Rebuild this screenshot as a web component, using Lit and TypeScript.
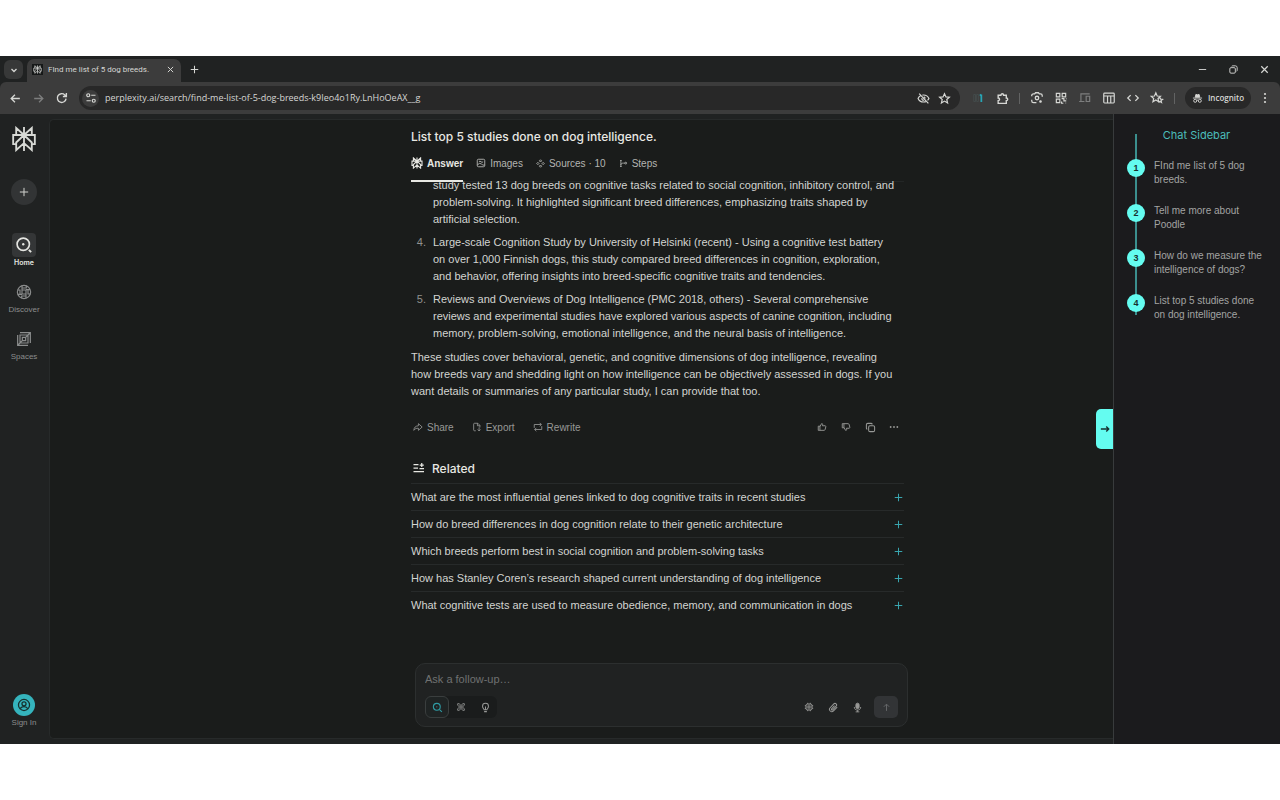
import { LitElement, html, css, svg, TemplateResult } from "lit";
import { customElement } from "lit/decorators.js";

const glyphs: Record<string, TemplateResult> = {
  chevron: svg`<path d="M7 10l5 5 5-5" stroke-width="2.6"/>`,
  close: svg`<path d="M5 5l14 14M19 5L5 19" stroke-width="2.6"/>`,
  plus: svg`<path d="M12 2v20M2 12h20"/>`,
  back: svg`<path d="M20 12H5M11 5l-7 7 7 7" stroke-width="2.4"/>`,
  forward: svg`<path d="M4 12h15M13 5l7 7-7 7" stroke-width="2.4"/>`,
  reload: svg`<path d="M19 13a7.5 7.5 0 1 1-2.2-6.3L19 9M19.500 3.500V9.500H13.500" stroke-width="2.4"/>`,
  tune: svg`<circle cx="6.500" cy="6.500" r="3"/><path d="M12.500 6.500H21M3 17.500h8.500"/><circle cx="17.500" cy="17.500" r="3"/>`,
  eyeOff: svg`<path d="M6.500 7C4.200 8.300 2.700 10.200 2 12c1.700 4 5.600 6.500 10 6.500 1.600 0 3-.3 4.300-.8M10 5.700c.7-.1 1.300-.2 2-.2 4.400 0 8.300 2.500 10 6.500-.5 1.300-1.400 2.500-2.500 3.500M4 3l17 18M9 11.500a3 3 0 0 0 4 3.500M12.500 9a3 3 0 0 1 2.500 3"/>`,
  star: svg`<path d="M12 3l2.700 6 6.300.6-4.800 4.200 1.500 6.400L12 16.800l-5.700 3.400 1.500-6.400L3 9.600 9.300 9z"/>`,
  starGroup: svg`<path d="M10 3l2.300 5.500 5.700.5-4.300 3.800L15 18.500l-5-3-5 3 1.300-5.700L2 9l5.700-.5zM14 13l3-2 1.300 3 3.200.3-2.500 2 .8 3.500-2.800-1.700-2.500 1.700"/>`,
  meter: svg`<path d="M3 6h3v12H3zM8 6h3v12H8z" stroke="#465050" stroke-width="1.200"/><path d="M16 6v13M13.500 8l2.500-2" stroke="#28a5b5" stroke-width="3"/>`,
  puzzle: svg`<path d="M4 6h5c0-3.500 5-3.500 5 0h5v5c3.500 0 3.500 5 0 5v5H4v-5c3.500 0 3.500-5 0-5z"/>`,
  lens: svg`<path d="M3 9V7a3 3 0 0 1 3-2h2l1.500-2h5L16 5h2a3 3 0 0 1 3 3v2M3 15v2a3 3 0 0 0 3 3h5"/><circle cx="12" cy="12" r="3"/><circle cx="18" cy="18" r="1.200" fill="currentColor"/>`,
  qr: svg`<path d="M4 4h6v6H4zM14 4h6v6h-6zM4 14h6v6H4z"/><path d="M13 13h4v4h4M21 13v1M13 18v3h3M20 20v1"/>`,
  devices: svg`<path d="M5 17V5h15M2 18h9M14 9h6v9h-6z"/>`,
  layout: svg`<rect x="3" y="3.500" width="18" height="17" rx="1.500"/><path d="M3 8.500h18M9.500 8.500v12M15 8.500v12"/>`,
  code: svg`<path d="M8 7l-5 5 5 5M16 7l5 5-5 5" stroke-width="2.200"/>`,
  incognito: svg`<path d="M7 9l1.500-6 3.500 1 3.500-1L17 9z" fill="currentColor"/><path d="M2 11h20"/><circle cx="7" cy="17" r="3.300"/><circle cx="17" cy="17" r="3.300"/><path d="M10 16q2-1 4 0"/>`,
  kebab: svg`<g fill="currentColor" stroke="none"><circle cx="12" cy="4" r="2.200"/><circle cx="12" cy="12" r="2.200"/><circle cx="12" cy="20" r="2.200"/></g>`,
  dots: svg`<g fill="currentColor" stroke="none"><circle cx="4" cy="12" r="2.200"/><circle cx="12" cy="12" r="2.200"/><circle cx="20" cy="12" r="2.200"/></g>`,
  minimize: svg`<path d="M4 12h16"/>`,
  restore: svg`<rect x="4" y="8" width="12" height="12" rx="2.500"/><path d="M8 5q1-1 3-1h5q4 0 4 4v5q0 2-1 3"/>`,
  logo: svg`<path d="M12 1v22M4.800 8.300V1.800L12 8.300l7.200-6.500v6.500M4.800 16.800H2V8.300h20v8.500h-2.800M12 8.300l-7.200 6.900v7l7.200-6.400 7.200 6.400v-7z"/>`,
  home: svg`<circle cx="11" cy="11" r="8.200"/><circle cx="11" cy="11" r="1.600" fill="currentColor" stroke="none"/><path d="M18.500 18.500l3 3" stroke-width="2.600"/>`,
  discover: svg`<circle cx="12" cy="12" r="10"/><path d="M9 2.500V9h6.500M2.500 9H6v6M15 21.500V15H8.500M21.500 15H18V9M15.500 2.800V6H9M8.500 21.200V18H15M9 9v6M15 9v6M2.800 15.500H9M15 8.500h6"/>`,
  spaces: svg`<path d="M6 2.500h15.500v15.500M2.500 6v15.500H18M6 6h12v12H6zM9.500 9.500h5v5h-5zM18 6l3.500-3.500M2.500 21.500L6 18M14.500 9.500L18 6M6 18l3.500-3.500"/>`,
  images: svg`<rect x="3" y="3" width="18" height="18" rx="3"/><path d="M3 17l5-4 5 1 3 3h5"/><path d="M7 9q2.500-3 5 0t5 0"/>`,
  sources: svg`<path d="M12 2l3 3-3 3-3-3zM12 16l3 3-3 3-3-3zM5 9l3 3-3 3-3-3zM19 9l3 3-3 3-3-3z"/>`,
  steps: svg`<path d="M5 3v18M5 16c0-4 3-5 7-5h4"/><circle cx="18" cy="11" r="2.400"/><path d="M3 4h4M3 20h4"/>`,
  share: svg`<path d="M13 4l9 8-9 8v-5C8 14.500 5 16 2 20c.5-7 4-10.500 11-11z"/>`,
  export: svg`<path d="M9 21H6q-2 0-2-2V5q0-2 2-2h8l5 5v5M13 3v6h6M17 13v8M13.500 18l3.500 3.500 3.500-3.500"/>`,
  rewrite: svg`<path d="M3 14V6h17M16 2l4 4-4 4M21 10v8H4M8 14l-4 4 4 4"/>`,
  up: svg`<path d="M3 10h4v10H3zM7 11l4-7c3-.5 3 1.500 2 5h7q1.500 1 1 3l-1.500 6q-.6 2-2.500 2H7"/>`,
  down: svg`<path d="M3 14h4V4H3zM7 13l4 7c3 .5 3-1.500 2-5h7q1.500-1 1-3l-1.500-6Q18.900 4 17 4H7"/>`,
  copy: svg`<rect x="8" y="8" width="13" height="13" rx="3"/><path d="M5 16q-2-.5-2-3V6q0-3 3-3h7q2.500 0 3 2"/>`,
  related: svg`<path d="M1 5h10M1 12h9M1 19h21M13 13h9M17.500 2v8M13.500 6h8" stroke-width="2.500"/>`,
  search: svg`<circle cx="10.500" cy="10.500" r="7.500"/><circle cx="10.500" cy="10.500" r="1.300" fill="currentColor" stroke="none"/><path d="M16.500 16.500L21.500 21.500"/>`,
  research: svg`<path d="M4 4h4l4 5 4-5h4v4l-5 4 5 4v4h-4l-4-5-4 5H4v-4l5-4-5-4z"/><path d="M8 8l8 8M16 8l-8 8" stroke-width="1.500"/>`,
  bulb: svg`<path d="M9 17c0-2-3.500-3.500-3.500-8a6.500 6.500 0 0 1 13 0c0 4.500-3.500 6-3.500 8zM9 21h6M12 10v6"/>`,
  chip: svg`<rect x="5" y="5" width="14" height="14" rx="3"/><rect x="9.500" y="9.500" width="5" height="5"/><path d="M9 2v3M15 2v3M9 19v3M15 19v3M2 9h3M2 15h3M19 9h3M19 15h3"/>`,
  clip: svg`<path d="M20 11l-8 8.500a5 5 0 0 1-7.300-7l8-8.300a3.500 3.500 0 0 1 5 5l-7.500 8a1.600 1.600 0 0 1-2.400-2.300l6.500-7"/>`,
  mic: svg`<rect x="8.500" y="2.500" width="7" height="12" rx="3.500" fill="currentColor"/><path d="M5 11c0 9 14 9 14 0M12 18v3.500M8 21.500h8"/>`,
  arrowUp: svg`<path d="M12 21V4M5 10l7-7 7 7"/>`,
  arrowRight: svg`<path d="M2 12h19M15 6l6 6-6 6" stroke-width="3.200"/>`,
  user: svg`<circle cx="12" cy="12" r="9.500"/><circle cx="12" cy="10" r="3.500"/><path d="M5.500 18.500c2-5 11-5 13 0"/>`,
};

const icon = (name: string, size = 12, weight = 2) => html`<svg
  class="icon" width=${size} height=${size} viewBox="0 0 24 24" fill="none"
  stroke="currentColor" stroke-width=${weight} aria-hidden="true">${glyphs[name]}</svg>`;

const shared = css`
  * { box-sizing: border-box; }
  button {
    font: inherit; color: inherit; background: none; border: 0; padding: 0; margin: 0;
    display: flex; align-items: center; justify-content: center; cursor: pointer;
  }
  a { color: inherit; text-decoration: none; }
  ol, ul, h1, h2, p { margin: 0; padding: 0; font: inherit; }
  .icon { display: block; flex: none; }
`;

@customElement("browser-chrome")
class BrowserChrome extends LitElement {
  static styles = [shared, css`
    :host { display: block; background: #202222; color: #d6d7d4; font: 9px/12px "Open Sans", "Noto Sans", sans-serif; }
    .strip { display: flex; align-items: flex-end; height: 26px; padding-left: 4px; }
    .menu { width: 19px; height: 19px; border-radius: 6px; background: #373838; margin: 0 4px 3px 0; }
    .tab { display: flex; align-items: center; width: 154px; height: 23px; padding: 0 6px 2px 5px; gap: 5px; background: #3c3c3c; border-radius: 7px 7px 0 0; }
    .favicon { display: grid; place-items: center; width: 11px; height: 11px; background: #161818; }
    .title { flex: 1; white-space: nowrap; font-family: Roboto, sans-serif; font-size: 8px; }
    .new { margin: 0 0 8px 9px; }
    .window { display: flex; gap: 20px; margin: 0 10px 7px auto; }
    .bar { display: flex; align-items: center; gap: 10px; height: 32px; padding: 0 11px 0 9px; background: #3c3c3c; border-radius: 6px 6px 0 0; }
    .dim { color: #7d7e7e; }
    .omni { display: flex; flex: 1; align-items: center; gap: 6px; height: 24px; border-radius: 12px; background: #282828; padding: 0 9px 0 3px; margin-right: 2px; min-width: 0; }
    .site { width: 17px; height: 17px; border-radius: 50%; background: #3c3c3c; }
    .url { flex: 1; min-width: 0; border: 0; outline: 0; padding: 0; background: none; color: #d6d7d4; font: inherit; }
    .omni button + button { margin-left: 2px; }
    .sep { width: 1px; height: 11px; background: #626363; }
    .chip { display: flex; align-items: center; justify-content: center; gap: 5px; width: 66px; height: 22px; border-radius: 11px; background: #282828; font-size: 8px; font-weight: 600; }
    .kebab { width: 8px; }
  `];

  render() {
    return html`
      <div class="strip">
        <button class="menu" aria-label="Search tabs">${icon("chevron", 12)}</button>
        <div class="tab">
          <span class="favicon">${icon("logo", 9)}</span>
          <span class="title">FInd me list of 5 dog breeds.</span>
          <button aria-label="Close tab">${icon("close", 9)}</button>
        </div>
        <button class="new" aria-label="New tab">${icon("plus", 9, 2.8)}</button>
        <div class="window">
          <button aria-label="Minimize">${icon("minimize", 11)}</button>
          <button aria-label="Restore">${icon("restore", 11)}</button>
          <button aria-label="Close">${icon("close", 11)}</button>
        </div>
      </div>
      <div class="bar">
        <button aria-label="Back">${icon("back", 13)}</button>
        <button class="dim" aria-label="Forward">${icon("forward", 13)}</button>
        <button aria-label="Reload">${icon("reload", 14)}</button>
        <div class="omni">
          <button class="site" aria-label="Site information">${icon("tune", 12, 2.4)}</button>
          <input class="url" aria-label="Address" .value=${"perplexity.ai/search/find-me-list-of-5-dog-breeds-k9Ieo4o1Ry.LnHoOeAX__g"} />
          <button aria-label="Third-party cookies blocked">${icon("eyeOff", 13, 2.2)}</button>
          <button aria-label="Bookmark">${icon("star", 13, 2.2)}</button>
        </div>
        <button aria-label="Monitor">${icon("meter", 14)}</button>
        <button aria-label="Extensions">${icon("puzzle", 13, 2.6)}</button>
        <span class="sep"></span>
        <button aria-label="Search with Lens">${icon("lens", 14, 2.2)}</button>
        <button aria-label="QR code">${icon("qr", 14)}</button>
        <button class="dim" aria-label="Devices">${icon("devices", 14)}</button>
        <button aria-label="Reading list">${icon("layout", 14)}</button>
        <button aria-label="Developer tools">${icon("code", 14)}</button>
        <button aria-label="Bookmarks">${icon("starGroup", 14)}</button>
        <span class="sep"></span>
        <span class="chip">${icon("incognito", 11)}Incognito</span>
        <button class="kebab" aria-label="Menu">${icon("kebab", 12)}</button>
      </div>`;
  }
}

@customElement("nav-rail")
class NavRail extends LitElement {
  static styles = [shared, css`
    :host { display: flex; flex-direction: column; align-items: center; width: 49px; flex: none; padding: 12px 1px 16px 0; color: #8b8d8d; font-size: 8px; line-height: 10px; }
    .logo { color: #d8dad6; }
    .add { width: 26px; height: 26px; border-radius: 50%; background: #323435; color: #d0d1ce; margin: 27px 0 28px; }
    nav { display: flex; flex-direction: column; gap: 12px; }
    .item { display: flex; flex-direction: column; align-items: center; gap: 1px; }
    .tile { display: grid; place-items: center; width: 24px; height: 24px; border-radius: 4px; }
    .active { color: #e4e5e1; font-family: Inter, sans-serif; font-size: 7px; font-weight: 600; }
    .active .tile { background: #343637; }
    .sign { display: flex; flex-direction: column; align-items: center; gap: 2px; margin-top: auto; }
    .avatar { display: grid; place-items: center; width: 22px; height: 22px; border-radius: 50%; background: #35b4bd; color: #16312f; }
  `];

  render() {
    return html`
      <a class="logo" href="#" aria-label="Perplexity">${icon("logo", 26, 1.7)}</a>
      <button class="add" aria-label="New thread">${icon("plus", 10, 2.4)}</button>
      <nav>
        <a class="item active" href="#"><span class="tile">${icon("home", 18, 2.2)}</span>Home</a>
        <a class="item" href="#"><span class="tile">${icon("discover", 16, 1.7)}</span>Discover</a>
        <a class="item" href="#"><span class="tile">${icon("spaces", 16, 1.8)}</span>Spaces</a>
      </nav>
      <a class="sign" href="#"><span class="avatar">${icon("user", 14, 2.2)}</span>Sign In</a>`;
  }
}

@customElement("answer-thread")
class AnswerThread extends LitElement {
  static styles = [shared, css`
    :host { display: flex; flex-direction: column; flex: 1; width: 100%; max-width: 645px; margin: 0 auto; padding: 7px 0 0 152px; color: #d3d4d1; font-size: 11px; line-height: 17px; }
    .heading { font-family: Inter, sans-serif; font-size: 12px; line-height: 19px; font-weight: 500; color: #e8e8e3; }
    .tabs { display: flex; gap: 13px; height: 36px; border-bottom: 1px solid #232626; }
    .tab { gap: 4px; height: 36px; color: #b4b5b2; font-size: 10px; border-bottom: 2px solid transparent; }
    .tab.on { color: #e8e8e3; border-color: #e8e8e3; font-weight: 700; }
    .list { display: flex; flex-direction: column; gap: 6px; margin: -5px 0 7px; list-style: none; }
    .list li { display: grid; grid-template-columns: 15px 1fr; gap: 7px; }
    .num { text-align: right; color: #90918f; }
    .row { display: block; white-space: nowrap; }
    .actions { display: flex; align-items: center; height: 24px; margin: 15px 4px 19px 2px; color: #989997; font-size: 10px; }
    .actions button { gap: 4px; margin-right: 18px; }
    .icons { display: flex; gap: 12px; margin-left: auto; }
    .icons button { width: 12px; margin: 0; }
    .related { display: flex; align-items: center; gap: 7px; height: 20px; padding-left: 2px; margin-bottom: 5px; font-family: Inter, sans-serif; font-size: 12px; font-weight: 500; color: #e8e8e3; }
    .questions { list-style: none; }
    .question { width: 100%; height: 27px; padding-top: 1px; justify-content: space-between; border-top: 1px solid #272a2a; text-align: left; }
    .question .icon { color: #3aa9b3; margin-right: 1px; }
    form { margin: auto -4px 11px 4px; padding: 6px 9px 8px; height: 64px; background: #202222; border: 1px solid #2c2f2f; border-radius: 10px; }
    .ask { display: block; width: 100%; height: 18px; border: 0; outline: 0; background: none; color: inherit; font: inherit; padding: 0; }
    .ask::placeholder { color: #6f7171; opacity: 1; }
    .tools { display: flex; align-items: center; margin-top: 8px; color: #989997; }
    .modes { display: flex; background: #1a1c1c; border-radius: 6px; margin-right: auto; }
    .modes button { width: 24px; height: 22px; border-radius: 6px; border: 1px solid transparent; }
    .modes .on { color: #2f9aa3; border-color: #3a3e3e; background: #1f2323; }
    .tool { width: 24px; height: 22px; }
    .send { width: 24px; height: 22px; margin-left: 5px; border-radius: 5px; background: #323436; color: #6a6c6e; }
  `];

  private items = [
    ["", "study tested 13 dog breeds on cognitive tasks related to social cognition, inhibitory control, and", "problem-solving. It highlighted significant breed differences, emphasizing traits shaped by", "artificial selection."],
    ["4.", "Large-scale Cognition Study by University of Helsinki (recent) - Using a cognitive test battery", "on over 1,000 Finnish dogs, this study compared breed differences in cognition, exploration,", "and behavior, offering insights into breed-specific cognitive traits and tendencies."],
    ["5.", "Reviews and Overviews of Dog Intelligence (PMC 2018, others) - Several comprehensive", "reviews and experimental studies have explored various aspects of canine cognition, including", "memory, problem-solving, emotional intelligence, and the neural basis of intelligence."],
  ];

  private summary = [
    "These studies cover behavioral, genetic, and cognitive dimensions of dog intelligence, revealing",
    "how breeds vary and shedding light on how intelligence can be objectively assessed in dogs. If you",
    "want details or summaries of any particular study, I can provide that too.",
  ];

  private questions = [
    "What are the most influential genes linked to dog cognitive traits in recent studies",
    "How do breed differences in dog cognition relate to their genetic architecture",
    "Which breeds perform best in social cognition and problem-solving tasks",
    "How has Stanley Coren’s research shaped current understanding of dog intelligence",
    "What cognitive tests are used to measure obedience, memory, and communication in dogs",
  ];

  render() {
    return html`
      <h1 class="heading">List top 5 studies done on dog intelligence.</h1>
      <div class="tabs">
        <button class="tab on">${icon("logo", 12, 2.2)}Answer</button>
        <button class="tab">${icon("images", 10, 2.2)}Images</button>
        <button class="tab">${icon("sources", 9, 2.4)}Sources · 10</button>
        <button class="tab">${icon("steps", 9, 2.2)}Steps</button>
      </div>
      <div>
        <ol class="list">
          ${this.items.map(([num, ...rows]) => html`<li><span class="num">${num}</span><div>${rows.map((r) => html`<span class="row">${r}</span>`)}</div></li>`)}
        </ol>
        <p>${this.summary.map((r) => html`<span class="row">${r}</span>`)}</p>
      </div>
      <div class="actions">
        <button>${icon("share", 10)}Share</button>
        <button>${icon("export", 10)}Export</button>
        <button>${icon("rewrite", 10)}Rewrite</button>
        <div class="icons">
          <button aria-label="Helpful">${icon("up", 10, 2.2)}</button>
          <button aria-label="Not helpful">${icon("down", 10, 2.2)}</button>
          <button aria-label="Copy">${icon("copy", 11, 2.2)}</button>
          <button aria-label="More">${icon("dots", 10)}</button>
        </div>
      </div>
      <h2 class="related">${icon("related", 12)}Related</h2>
      <ul class="questions">
        ${this.questions.map((q) => html`<li><button class="question">${q}${icon("plus", 9, 2.6)}</button></li>`)}
      </ul>
      <form @submit=${(e: Event) => e.preventDefault()}>
        <input class="ask" aria-label="Ask a follow-up" placeholder="Ask a follow-up…" />
        <div class="tools">
          <div class="modes">
            <button type="button" class="on" aria-label="Search">${icon("search", 11, 2.4)}</button>
            <button type="button" aria-label="Research">${icon("research", 10)}</button>
            <button type="button" aria-label="Labs">${icon("bulb", 11, 2.2)}</button>
          </div>
          <button type="button" class="tool" aria-label="Model">${icon("chip", 10, 2.4)}</button>
          <button type="button" class="tool" aria-label="Attach">${icon("clip", 11, 2.2)}</button>
          <button type="button" class="tool" aria-label="Dictate">${icon("mic", 11)}</button>
          <button class="send" aria-label="Send">${icon("arrowUp", 9, 2.4)}</button>
        </div>
      </form>`;
  }
}

@customElement("chat-sidebar")
class ChatSidebar extends LitElement {
  static styles = [shared, css`
    :host { display: block; flex: none; width: 167px; padding: 13px 14px 0 13px; background: #1b1b1d; border-left: 1px solid #383b3c; color: #a3a4a3; font-size: 10px; line-height: 14px; }
    h2 { text-align: center; font-family: Inter, sans-serif; font-size: 11px; line-height: 16px; color: #4bbdbb; margin-bottom: 16px; }
    ol { position: relative; display: flex; flex-direction: column; gap: 17px; list-style: none; }
    ol::before { content: ""; position: absolute; left: 8px; top: -25px; bottom: 7px; width: 2px; background: #3b8f8e; }
    a { display: flex; gap: 9px; }
    .dot { position: relative; display: grid; place-items: center; flex: none; width: 18px; height: 18px; border-radius: 50%; background: #64fcf0; color: #17302f; font-size: 9px; font-weight: 700; }
    .row { display: block; white-space: nowrap; }
  `];

  private entries = [
    ["FInd me list of 5 dog", "breeds."],
    ["Tell me more about", "Poodle"],
    ["How do we measure the", "intelligence of dogs?"],
    ["List top 5 studies done", "on dog intelligence."],
  ];

  render() {
    return html`
      <h2>Chat Sidebar</h2>
      <ol>
        ${this.entries.map((rows, i) => html`<li><a href="#"><span class="dot">${i + 1}</span><span>${rows.map((r) => html`<span class="row">${r}</span>`)}</span></a></li>`)}
      </ol>`;
  }
}

@customElement("app-root")
class AppRoot extends LitElement {
  static styles = [shared, css`
    :host { display: flex; flex-direction: column; box-sizing: border-box; min-height: 100vh; padding: 56px 0; background: #fff; font-family: "Liberation Sans", Arial, sans-serif; }
    .shell { display: flex; flex: 1; background: #202222; }
    .main { position: relative; display: flex; flex: 1; min-width: 0; padding: 5px 0; }
    .panel { display: flex; flex: 1; min-width: 0; background: #1a1c1b; border: 1px solid #272a2a; border-right: 0; border-radius: 5px 0 0 5px; }
    .toggle { position: absolute; right: 0; top: 50%; width: 17px; height: 40px; margin-top: -20px; background: #64fcf0; color: #17302f; border-radius: 5px 0 0 5px; }
  `];

  render() {
    return html`
      <browser-chrome></browser-chrome>
      <div class="shell">
        <nav-rail></nav-rail>
        <main class="main">
          <div class="panel"><answer-thread></answer-thread></div>
          <button class="toggle" aria-label="Collapse chat sidebar">${icon("arrowRight", 10)}</button>
        </main>
        <chat-sidebar></chat-sidebar>
      </div>`;
  }
}
